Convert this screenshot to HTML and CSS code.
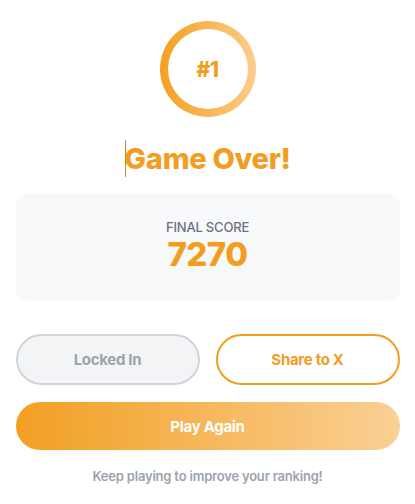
FILE: index.html
```html
<!DOCTYPE html>
<html lang="en">
<head>
    <meta charset="UTF-8">
    <meta name="viewport" content="width=device-width, initial-scale=1.0">
    <title>Game Over</title>
    <link rel="stylesheet" href="styles.css">
</head>
<body>

    <div class="container">
        <div class="rank-ring">
            <div class="rank-inner">#1</div>
        </div>

        <h1 class="title"><span class="caret"></span>Game Over!</h1>

        <div class="score-card">
            <p class="score-label">FINAL SCORE</p>
            <p class="score-value">7270</p>
        </div>

        <div class="actions">
            <button class="button locked">Locked In</button>
            <button class="button share">Share to X</button>
        </div>

        <button class="button play">Play Again</button>

        <p class="hint">Keep playing to improve your ranking!</p>
    </div>

</body>
</html>
```

FILE: styles.css
```css
body {
    font-family: 'Inter', 'Liberation Sans', sans-serif;
    background-color: #fff;
    color: #333;
    margin: 0;
    padding: 0;
}

.container {
    max-width: 384px;
    margin: 0 auto;
    padding-top: 21px;
    display: flex;
    flex-direction: column;
    align-items: center;
}

.rank-ring {
    width: 96px;
    height: 96px;
    border-radius: 50%;
    padding: 8px;
    box-sizing: border-box;
    background: linear-gradient(90deg, #f4a020, #fbcd8c);
}

.rank-inner {
    width: 100%;
    height: 100%;
    border-radius: 50%;
    background-color: #fff;
    display: flex;
    justify-content: center;
    align-items: center;
    color: #f29d1f;
    font-size: 21px;
    font-weight: 800;
    letter-spacing: -0.5px;
}

.title {
    position: relative;
    margin: 23px 0 0;
    color: #f29d1f;
    font-size: 29px;
    font-weight: 800;
    line-height: 37px;
    letter-spacing: -0.3px;
}

.caret {
    position: absolute;
    left: 1px;
    top: 0;
    bottom: 0;
    width: 1px;
    background-color: #c98a2d;
}

.score-card {
    align-self: stretch;
    margin-top: 16px;
    background-color: #f8f9fb;
    border-radius: 12px;
    padding: 24px 0 30px;
    text-align: center;
}

.score-label {
    margin: 0;
    color: #6b7280;
    font-size: 13px;
    font-weight: 500;
    line-height: 20px;
    letter-spacing: -0.2px;
}

.score-value {
    margin: 0;
    color: #f29d1f;
    font-size: 33px;
    font-weight: 800;
    line-height: 34px;
    letter-spacing: -0.5px;
}

.actions {
    align-self: stretch;
    margin-top: 33px;
    display: grid;
    grid-template-columns: 1fr 1fr;
    gap: 16px;
}

.button {
    font-family: inherit;
    font-size: 15px;
    font-weight: 700;
    letter-spacing: -0.3px;
    border-radius: 999px;
    cursor: pointer;
}

.locked {
    height: 51px;
    background-color: #f3f4f6;
    border: 2px solid #d1d5db;
    color: #9ca3af;
}

.share {
    height: 51px;
    background-color: #fff;
    border: 2px solid #f29d1f;
    color: #f29d1f;
}

.play {
    align-self: stretch;
    margin-top: 17px;
    height: 48px;
    border: none;
    color: #fff;
    background: linear-gradient(90deg, #f29f22, #fad095);
}

.hint {
    margin: 16px 0 0;
    color: #9ca3af;
    font-size: 13px;
    font-weight: 600;
    line-height: 20px;
    letter-spacing: -0.2px;
}
```
